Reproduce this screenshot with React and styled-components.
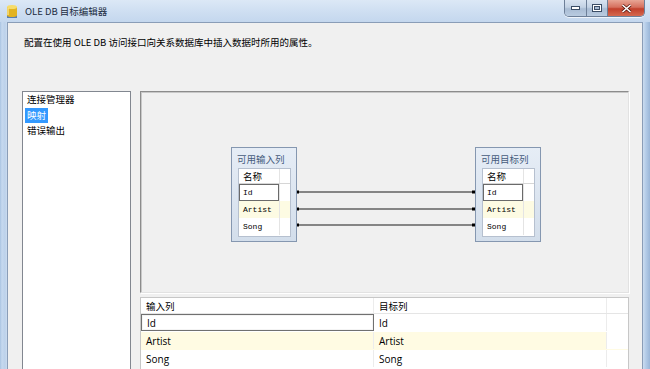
import React from "react";
import styled, { createGlobalStyle } from "styled-components";

const FONT = `"Noto Sans CJK SC", "Noto Sans", sans-serif`;
const LATIN = `"Open Sans", "Noto Sans CJK SC", sans-serif`;
const MONO = `"Liberation Mono", "DejaVu Sans Mono", monospace`;

const navItems = [
    { label: "连接管理器" },
    { label: "映射", selected: true },
    { label: "错误输出" },
];

const columns = [
    { name: "Id", focus: true },
    { name: "Artist", tint: true },
    { name: "Song" },
];

function AppIcon() {
    return (
        <svg width="12" height="15" viewBox="0 0 12 15">
            <rect x="1" y="10" width="10" height="4" fill="#5a7fb0" />
            <path d="M1 3 V11 A5 2 0 0 0 11 11 V3 Z" fill="#e2b322" />
            <ellipse cx="6" cy="3" rx="5" ry="2" fill="#f6dc6a" />
            <path d="M2 4 V11" stroke="#fff3b0" strokeWidth="1" />
        </svg>
    );
}

function NodeBox({ title, left }) {
    return (
        <Node style={{ left }}>
            <NodeTitle>{title}</NodeTitle>
            <NodeList>
                <NodeHead>
                    <NodeCell>名称</NodeCell>
                    <NodeSide />
                </NodeHead>
                {columns.map((c) => (
                    <NodeRow key={c.name} $tint={c.tint}>
                        <NodeCell $focus={c.focus} $mono>
                            {c.name}
                        </NodeCell>
                        <NodeSide />
                    </NodeRow>
                ))}
            </NodeList>
        </Node>
    );
}

export default function App() {
    return (
        <>
            <GlobalStyle />
            <Window>
                <TitleBar>
                    <AppIcon />
                    <TitleText>OLE DB 目标编辑器</TitleText>
                    <CaptionButtons>
                        <CapBtn $w={22}>
                            <svg width="9" height="4" viewBox="0 0 9 4">
                                <rect x="0.5" y="0.5" width="8" height="3" fill="#fff" stroke="#3b4d66" />
                            </svg>
                        </CapBtn>
                        <CapBtn $w={21}>
                            <svg width="10" height="8" viewBox="0 0 10 8">
                                <rect x="0.5" y="0.5" width="9" height="7" fill="#fff" stroke="#3b4d66" />
                                <rect x="2.5" y="2.5" width="5" height="3" fill="#a9bcd4" stroke="#3b4d66" />
                            </svg>
                        </CapBtn>
                        <CloseBtn>
                            <svg width="11" height="9" viewBox="0 0 11 9">
                                <path d="M1.5 1 L9.5 8 M9.5 1 L1.5 8" stroke="#5a1b12" strokeWidth="3" />
                                <path d="M1.5 1 L9.5 8 M9.5 1 L1.5 8" stroke="#fff" strokeWidth="1.6" />
                            </svg>
                        </CloseBtn>
                    </CaptionButtons>
                </TitleBar>
                <Client>
                    <Header>
                        配置在使用 OLE DB 访问接口向关系数据库中插入数据时所用的属性。
                    </Header>
                    <Main>
                        <NavList>
                            {navItems.map((n) => (
                                <NavItem key={n.label}>
                                    <NavLabel $selected={n.selected}>{n.label}</NavLabel>
                                </NavItem>
                            ))}
                        </NavList>
                        <RightPane>
                            <Diagram>
                                <Links width="487" height="199">
                                    {[100, 117, 133].map((y) => (
                                        <g key={y}>
                                            <line x1="156" y1={y} x2="334" y2={y} stroke="#1a1a1a" strokeWidth="1.2" />
                                            <rect x="155" y={y - 1.5} width="3" height="3" fill="#000" />
                                            <rect x="331" y={y - 1.5} width="3" height="3" fill="#000" />
                                        </g>
                                    ))}
                                </Links>
                                <NodeBox title="可用输入列" left={90} />
                                <NodeBox title="可用目标列" left={334} />
                            </Diagram>
                            <Grid>
                                <GridRow $head>
                                    <GridCell $head>输入列</GridCell>
                                    <GridCell $head>目标列</GridCell>
                                    <GridRest />
                                </GridRow>
                                {columns.map((c) => (
                                    <GridRow key={c.name} $tint={c.tint}>
                                        <GridCell $focus={c.focus}>{c.name}</GridCell>
                                        <GridCell>{c.name}</GridCell>
                                        <GridRest />
                                    </GridRow>
                                ))}
                            </Grid>
                        </RightPane>
                    </Main>
                </Client>
            </Window>
        </>
    );
}

const GlobalStyle = createGlobalStyle`
    html, body {
        margin: 0;
        padding: 0;
        background: #fff;
    }
    * {
        box-sizing: border-box;
    }
`;
const Window = styled.div`
    width: 650px;
    height: 369px;
    overflow: hidden;
    display: flex;
    flex-direction: column;
    padding: 0 7px;
    font-family: ${FONT};
    font-size: 9.5px;
    color: #000;
    background: linear-gradient(90deg, #a9c3e1 0px, #c6d9ef 2px, #bcd1ea 5px, #cbdcf0 7px, #cbdcf0 643px, #b3cbe7 646px, #9ab6d8 650px);
`;
const TitleBar = styled.div`
    height: 22px;
    flex-shrink: 0;
    display: flex;
    align-items: flex-start;
    margin: 0 -7px;
    padding: 4px 5px 0 6px;
    background: linear-gradient(180deg, #dce8f6 0%, #cfdff2 50%, #c4d7ee 100%);
    & > svg {
        flex-shrink: 0;
    }
`;
const TitleText = styled.div`
    margin-left: 7px;
    line-height: 14px;
    color: #1b2b40;
`;
const CaptionButtons = styled.div`
    margin-left: auto;
    margin-top: -4px;
    display: flex;
    height: 17px;
    border: 1px solid #6d7f98;
    border-top: none;
    border-radius: 0 0 5px 5px;
    overflow: hidden;
    box-shadow: 0 1px 0 rgba(255, 255, 255, 0.7);
`;
const CapBtn = styled.div`
    width: ${(p) => p.$w}px;
    display: flex;
    align-items: center;
    justify-content: center;
    border-right: 1px solid #6d7f98;
    background: linear-gradient(180deg, #d9e4f1 0%, #c3d2e4 45%, #a9bcd4 55%, #b9cbe0 100%);
`;
const CloseBtn = styled.div`
    width: 36px;
    display: flex;
    align-items: center;
    justify-content: center;
    background: linear-gradient(180deg, #e8a595 0%, #d6705e 45%, #c2402c 55%, #d5694f 100%);
`;
const Client = styled.div`
    flex: 1;
    min-height: 0;
    display: flex;
    flex-direction: column;
    background: #f0f0f0;
    border: 1px solid #8a9db7;
    border-bottom: none;
`;
const Header = styled.div`
    height: 46px;
    flex-shrink: 0;
    padding: 12px 0 0 16px;
    line-height: 14px;
`;
const Main = styled.div`
    flex: 1;
    min-height: 0;
    display: flex;
    gap: 9px;
    padding: 22px 13px 0 14px;
`;
const NavList = styled.div`
    width: 109px;
    flex-shrink: 0;
    background: #fff;
    border: 1px solid #828790;
    border-bottom: none;
    padding: 0 0 0 2px;
`;
const NavItem = styled.div`
    height: 15.5px;
    display: flex;
    align-items: center;
`;
const NavLabel = styled.span`
    padding: 0 2px;
    line-height: 15px;
    background: ${(p) => (p.$selected ? "#3399ff" : "transparent")};
    color: ${(p) => (p.$selected ? "#fff" : "#000")};
`;
const RightPane = styled.div`
    flex: 1;
    display: flex;
    flex-direction: column;
    gap: 4px;
`;
const Diagram = styled.div`
    position: relative;
    height: 202px;
    flex-shrink: 0;
    background: #f0f0f0;
    border-top: 1px solid #8c8c8c;
    border-left: 1px solid #8c8c8c;
    border-right: 1px solid #e2e2e2;
    border-bottom: 1px solid #e2e2e2;
    box-shadow: inset 1px 1px 0 #c8c8c8, 1px 1px 0 #fff;
`;
const Links = styled.svg`
    position: absolute;
    left: 0;
    top: 0;
`;
const Node = styled.div`
    position: absolute;
    top: 55px;
    width: 66px;
    height: 95px;
    display: flex;
    flex-direction: column;
    border: 1px solid #8597b0;
    background: linear-gradient(180deg, #e6edf6 0%, #d3deeb 100%);
`;
const NodeTitle = styled.div`
    height: 20px;
    padding: 4px 0 0 5px;
    line-height: 14px;
    color: #465b7c;
`;
const NodeList = styled.div`
    margin: 0 5px 0 6px;
    height: 69px;
    background: #fff;
    border: 1px solid #b6c0cf;
    display: flex;
    flex-direction: column;
`;
const NodeHead = styled.div`
    display: flex;
    height: 15px;
    border-bottom: 1px solid #d6d6d6;
    line-height: 14px;
`;
const NodeRow = styled.div`
    display: flex;
    height: 17px;
    background: ${(p) => (p.$tint ? "#fdfbe3" : "#fff")};
`;
const NodeCell = styled.div`
    width: 40px;
    padding-left: 3px;
    display: flex;
    align-items: center;
    font-family: ${(p) => (p.$mono ? MONO : FONT)};
    font-size: ${(p) => (p.$mono ? "8px" : "9.5px")};
    border: 1px solid ${(p) => (p.$focus ? "#6a6a6a" : "transparent")};
`;
const NodeSide = styled.div`
    flex: 1;
    border-left: 1px solid #e4e4e4;
`;
const Grid = styled.div`
    flex: 1;
    background: #fff;
    border: 1px solid #c7c7c7;
    border-bottom: none;
`;
const GridRow = styled.div`
    display: flex;
    height: ${(p) => (p.$head ? "16px" : "18px")};
    background: ${(p) => (p.$tint ? "#fffbe3" : "#fff")};
    border-bottom: 1px solid ${(p) => (p.$head ? "#e5e5e5" : "transparent")};
`;
const GridCell = styled.div`
    width: 233px;
    flex-shrink: 0;
    display: flex;
    align-items: center;
    padding-left: 5px;
    font-family: ${(p) => (p.$head ? FONT : LATIN)};
    font-size: ${(p) => (p.$head ? "9.5px" : "10px")};
    border-right: 1px solid #ececec;
    ${(p) =>
        p.$focus &&
        `
        border: 1px solid #707070;
        box-shadow: inset 0 0 0 1px #f4f4f4;
    `}
`;
const GridRest = styled.div`
    flex: 1;
    background: #fff;
`;
